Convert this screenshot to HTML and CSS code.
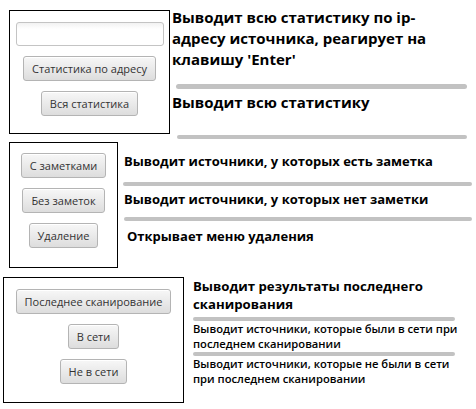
FILE: index.html
```html
<!DOCTYPE html>
<html lang="ru">
<head>
<meta charset="utf-8">
<link rel="stylesheet" href="styles.css">
</head>
<body>
<div class="page">
  <section class="row row1">
    <div class="box box1">
      <div class="field"></div>
      <button class="btn">Статистика по адресу</button>
      <button class="btn">Вся статистика</button>
    </div>
    <div class="desc desc1">
      <p class="t-lg">Выводит всю статистику по ip-<br>адресу источника, реагирует на<br>клавишу 'Enter'</p>
      <div class="sep sep1a"></div>
      <p class="t-lg t2">Выводит всю статистику</p>
      <div class="sep sep1b"></div>
    </div>
  </section>

  <section class="row row2">
    <div class="box box2">
      <button class="btn">С заметками</button>
      <button class="btn">Без заметок</button>
      <button class="btn">Удаление</button>
    </div>
    <div class="desc desc2">
      <p class="t-md">Выводит источники, у которых есть заметка</p>
      <div class="sep sep2a"></div>
      <p class="t-md t4">Выводит источники, у которых нет заметки</p>
      <div class="sep sep2b"></div>
      <p class="t-md t5">Открывает меню удаления</p>
    </div>
  </section>

  <section class="row row3">
    <div class="box box3">
      <button class="btn">Последнее сканирование</button>
      <button class="btn">В сети</button>
      <button class="btn">Не в сети</button>
    </div>
    <div class="desc desc3">
      <p class="t-hd">Выводит результаты последнего<br>сканирования</p>
      <div class="sep sep3a"></div>
      <p class="t-sm">Выводит источники, которые были в сети при<br>последнем сканировании</p>
      <div class="sep sep3b"></div>
      <p class="t-sm">Выводит источники, которые не были в сети<br>при последнем сканировании</p>
    </div>
  </section>
</div>
</body>
</html>
```

FILE: styles.css
```css
* { box-sizing: border-box; }
html, body { margin: 0; padding: 0; background: #fff; }
body { width: 476px; height: 409px; overflow: hidden; font-family: "Open Sans", "Noto Sans", sans-serif; color: #000; }
p { margin: 0; }

.page { display: flex; flex-direction: column; }

.row { display: flex; align-items: flex-start; }
.row1 { margin-top: 10px; padding-left: 9px; height: 124px; }
.row2 { margin-top: 8px; padding-left: 9px; height: 126px; }
.row3 { margin-top: 9px; padding-left: 3px; height: 126px; }

.box {
  border: 1px solid #000;
  display: flex;
  flex-direction: column;
  align-items: center;
  gap: 10px;
  flex: none;
}
.box1 { width: 161px; height: 124px; padding-top: 11px; }
.box2 { width: 109px; height: 126px; padding-top: 10px; }
.box3 { width: 181px; height: 126px; padding-top: 11px; }

.field {
  width: 148px;
  height: 24px;
  border: 1px solid #c4c4c4;
  border-radius: 3px;
  background: linear-gradient(#f2f2f2, #fff 6px);
}

.btn {
  height: 25px;
  padding: 0 8px;
  border: 1px solid #b4b4b4;
  border-radius: 3px;
  background: linear-gradient(#f7f7f7, #dddddd);
  font-family: "Open Sans", "Noto Sans", sans-serif;
  font-size: 11px;
  color: #333;
  line-height: 23px;
  box-shadow: inset 0 1px 0 #fff;
}

.desc { display: flex; flex-direction: column; flex: 1; }
.desc1 { margin-left: 2px; margin-top: -3px; }
.desc2 { margin-left: 6px; margin-top: 10px; }
.desc3 { margin-left: 9px; margin-top: 0; }

.t-lg { font-weight: 700; font-size: 15px; line-height: 21px; }
.t-md { font-weight: 700; font-size: 13px; line-height: 18px; }
.t-hd { font-weight: 700; font-size: 13.2px; line-height: 18px; }
.t-sm { font-weight: 600; font-size: 11.2px; line-height: 15px; }

.sep { height: 5px; border-radius: 3px; background: #c2c2c2; }
.sep1a { margin: 14px 9px 0 4px; }
.t2 { margin-top: 3px; }
.sep1b { margin: 22px 9px 0 5px; height: 4px; }

.sep2a { margin: 12px 4px 0 -1px; height: 4px; }
.t4 { margin-top: 4px; }
.sep2b { margin: 9px 4px 0 0; height: 4px; }
.t5 { margin-top: 6px; margin-left: 3px; }

.sep3a { margin: 4px 21px 0 0; height: 4px; }
.sep3b { margin: 1px 21px 0 0; height: 4px; }
```
